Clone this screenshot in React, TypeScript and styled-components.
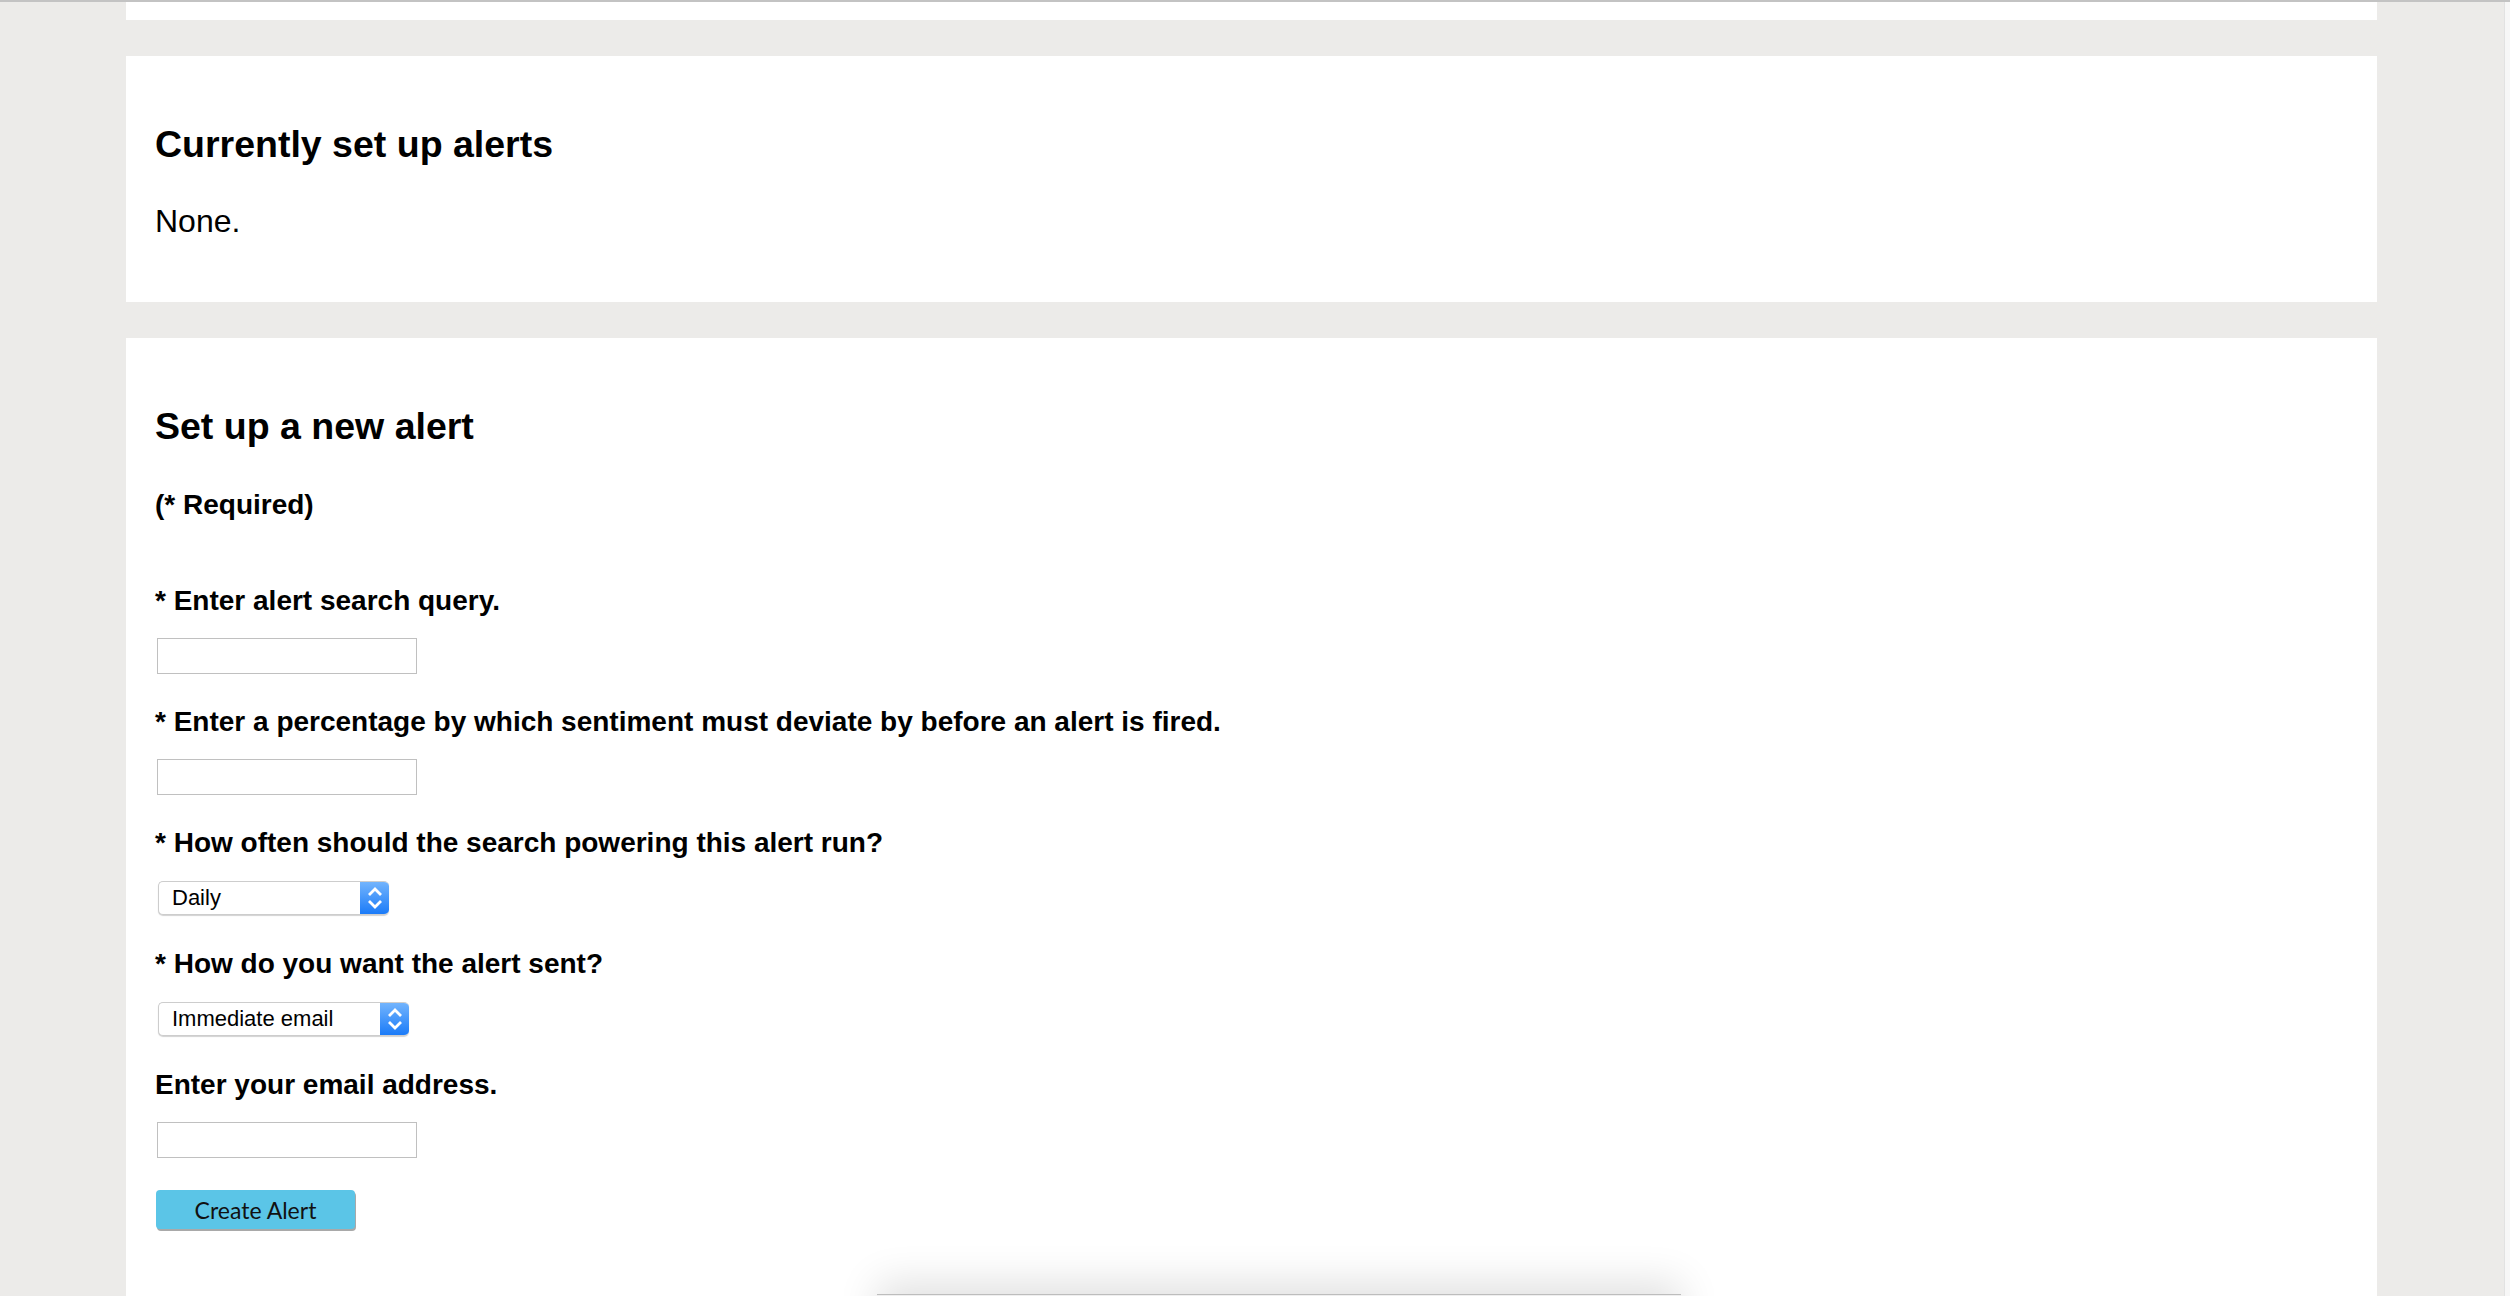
import React from "react";
import styled, { createGlobalStyle } from "styled-components";

const GlobalStyle = createGlobalStyle`
  html, body {
    margin: 0;
    padding: 0;
    background: #ecebe9;
    overflow: hidden;
  }
  body {
    font-family: "Liberation Sans", Arial, Helvetica, sans-serif;
    color: #000;
  }
`;

const Frame = styled.div`
  display: flex;
  height: 100vh;
  border-top: 2px solid #c3c3c3;
  box-sizing: border-box;
`;

const Main = styled.main`
  flex: 1;
  display: flex;
  flex-direction: column;
  gap: 36px;
  padding: 0 127px 0 126px;
  min-width: 0;
`;

const ScrollTrack = styled.div`
  width: 5px;
  background: #f7f7f7;
  border-left: 1px solid #e2e2e2;
`;

const CardStub = styled.div`
  height: 18px;
  background: #fff;
  flex-shrink: 0;
`;

const Card = styled.section<{ $grow?: boolean }>`
  background: #fff;
  padding: 67px 29px 62px;
  flex-shrink: 0;
  ${(p) => (p.$grow ? "flex: 1;" : "")}
`;

const Heading = styled.h2`
  margin: 0;
  font-size: 37.5px;
  line-height: 42px;
  font-weight: 700;
`;

const Text = styled.p`
  margin: 38px 0 0;
  font-size: 32px;
  line-height: 37px;
`;

const Required = styled.p`
  margin: 42px 0 64px;
  font-size: 28px;
  line-height: 32px;
  font-weight: 700;
`;

const Form = styled.form`
  display: flex;
  flex-direction: column;
  align-items: flex-start;
`;

const Field = styled.div`
  display: flex;
  flex-direction: column;
  align-items: flex-start;
  gap: 21px;
  margin-bottom: 32px;
`;

const Label = styled.label`
  font-size: 28px;
  line-height: 32px;
  font-weight: 700;
`;

const TextInput = styled.input`
  box-sizing: border-box;
  width: 260px;
  height: 36px;
  margin: 0 0 0 2px;
  border: 1px solid #c0c0c0;
  border-radius: 0;
  background: #fff;
  outline: none;
  font: 22px "Liberation Sans", Arial, sans-serif;
`;

const SelectBox = styled.div<{ $width: number }>`
  box-sizing: border-box;
  display: flex;
  width: ${(p) => p.$width}px;
  height: 34px;
  margin: 1px 0 1px 3px;
  border: 1px solid #cdcdcd;
  border-right: none;
  border-radius: 5px;
  background: #fff;
  box-shadow: 0 1px 1px rgba(0, 0, 0, 0.18);
  overflow: hidden;
`;

const SelectValue = styled.span`
  flex: 1;
  padding-left: 13px;
  font-size: 22px;
  line-height: 32px;
  color: #000;
`;

const Stepper = styled.span`
  width: 29px;
  display: flex;
  align-items: center;
  justify-content: center;
  background: linear-gradient(#72b4fd, #1b7bf8);
`;

const Button = styled.button`
  width: 199px;
  height: 39px;
  margin-left: 1px;
  border: none;
  border-radius: 4px;
  background: #5bc5e7;
  box-shadow: 1px 2px 0 #a9a9a9;
  font-family: Lato, "Liberation Sans", sans-serif;
  font-size: 23px;
  color: #111;
  padding: 0;
  cursor: pointer;
`;

const Dock = styled.div`
  position: fixed;
  left: 877px;
  top: 1294px;
  width: 804px;
  height: 60px;
  background: #efefef;
  border-top: 1px solid #bdbdbd;
  box-shadow: 0 -12px 40px rgba(0, 0, 0, 0.12);
`;

function Chevrons() {
  return (
    <svg width="16" height="24" viewBox="0 0 16 24" fill="none">
      <path d="M2 9 L8 3 L14 9" stroke="#fff" strokeWidth="2.8" />
      <path d="M2 15 L8 21 L14 15" stroke="#fff" strokeWidth="2.8" />
    </svg>
  );
}

function Select({ value, width }: { value: string; width: number }) {
  return (
    <SelectBox $width={width}>
      <SelectValue>{value}</SelectValue>
      <Stepper>
        <Chevrons />
      </Stepper>
    </SelectBox>
  );
}

export default function App() {
  return (
    <>
      <GlobalStyle />
      <Frame>
        <Main>
          <CardStub />
          <Card>
            <Heading>Currently set up alerts</Heading>
            <Text>None.</Text>
          </Card>
          <Card $grow>
            <Heading>Set up a new alert</Heading>
            <Required>(* Required)</Required>
            <Form onSubmit={(e) => e.preventDefault()}>
              <Field>
                <Label>* Enter alert search query.</Label>
                <TextInput type="text" />
              </Field>
              <Field>
                <Label>* Enter a percentage by which sentiment must deviate by before an alert is fired.</Label>
                <TextInput type="text" />
              </Field>
              <Field>
                <Label>* How often should the search powering this alert run?</Label>
                <Select value="Daily" width={231} />
              </Field>
              <Field>
                <Label>* How do you want the alert sent?</Label>
                <Select value="Immediate email" width={251} />
              </Field>
              <Field>
                <Label>Enter your email address.</Label>
                <TextInput type="email" />
              </Field>
              <Button type="submit">Create Alert</Button>
            </Form>
          </Card>
        </Main>
        <ScrollTrack />
      </Frame>
      <Dock />
    </>
  );
}
